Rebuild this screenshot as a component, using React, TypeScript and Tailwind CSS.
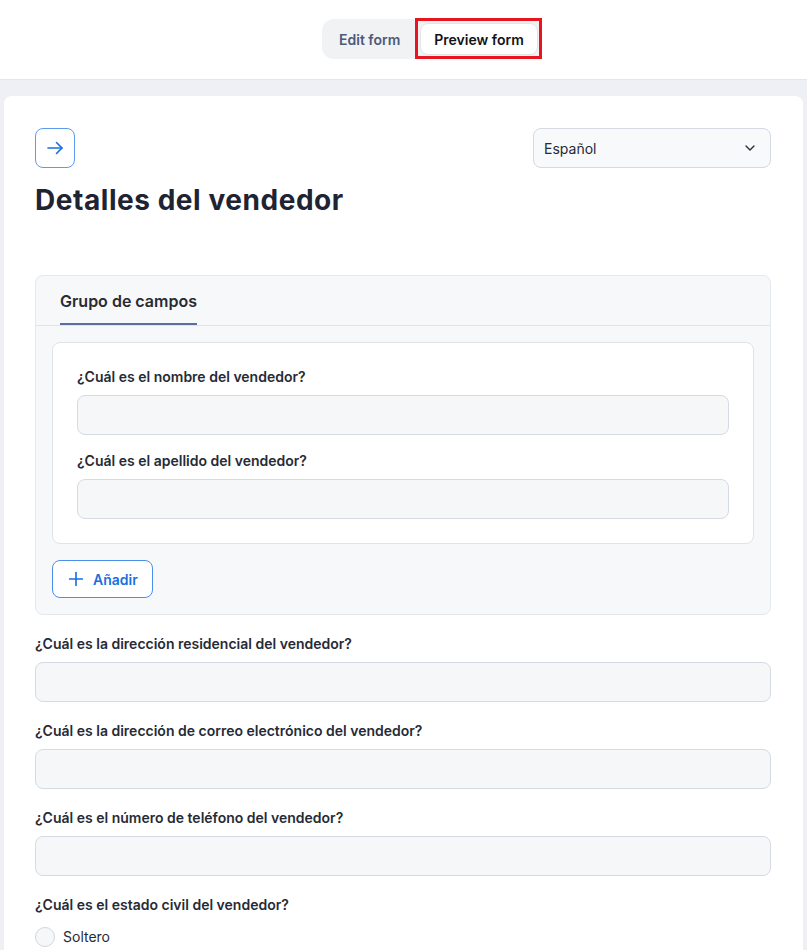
import React from "react";
import { ChevronDown, Plus } from "lucide-react";

function Field({ label }: { label: string }) {
  return (
    <div>
      <div className="text-[14px] leading-[20px] font-semibold text-[#262b36]">{label}</div>
      <div className="mt-2 h-[40px] rounded-lg border border-[#d6dae3] bg-[#f6f7f9]" />
    </div>
  );
}

export default function App() {
  return (
    <div className="min-h-screen bg-[#eff0f5]" style={{ fontFamily: "Inter, 'Noto Sans', sans-serif" }}>
      <header className="h-[80px] bg-white border-b border-[#e4e6ed] pt-[19px] pl-[322px]">
        <div className="inline-flex items-center h-[40px] bg-[#f1f2f4] rounded-xl p-1">
          <div className="pl-[13px] pr-[20px] text-[14px] font-semibold text-[#4b5a79]">Edit form</div>
          <div className="relative h-[32px] px-[13px] flex items-center bg-white rounded-lg border border-[#e2e4e8] text-[14px] font-semibold text-[#111318]">
            Preview form
            <div className="absolute -top-[6px] -left-[6px] -right-[5px] -bottom-[5px] border-[3px] border-[#e8141f]" />
          </div>
        </div>
      </header>
      <main className="pt-4 px-1">
        <div className="bg-white rounded-lg pl-[31px] pr-8 pt-8 pb-10">
          <div className="flex items-center justify-between">
            <div className="w-[40px] h-[40px] rounded-lg border border-[#5d9bef] flex items-center justify-center text-[#1a6fe0]">
              <svg width="16" height="16" viewBox="0 0 16 16" fill="none" stroke="currentColor" strokeWidth="1.6" strokeLinecap="round" strokeLinejoin="round">
                <path d="M1 8h14" />
                <path d="M9.5 2.5L15 8l-5.5 5.5" />
              </svg>
            </div>
            <div className="w-[238px] h-[40px] rounded-lg border border-[#d5d9e3] bg-[#f8f9fb] flex items-center justify-between pl-[10px] pr-[12px]">
              <span className="text-[14px] text-[#262b36]">Español</span>
              <ChevronDown size={16} strokeWidth={2} className="text-[#262b36]" />
            </div>
          </div>
          <h1 className="mt-[14px] text-[28px] leading-[36px] font-bold text-[#1e2433] tracking-[0.55px]">
            Detalles del vendedor
          </h1>
          <div className="mt-[57px] rounded-lg border border-[#e4e7ee] bg-[#f7f8fa]">
            <div className="h-[50px] border-b border-[#e1e4ec] px-6 flex">
              <div className="h-full flex items-center border-b-2 border-[#5a6f9c] text-[16px] font-semibold text-[#262b36] pt-[2px]">
                Grupo de campos
              </div>
            </div>
            <div className="p-4">
              <div className="bg-white rounded-lg border border-[#dfe3ea] px-6 pt-6 pb-6 flex flex-col gap-4">
                <Field label="¿Cuál es el nombre del vendedor?" />
                <Field label="¿Cuál es el apellido del vendedor?" />
              </div>
              <div className="mt-4 inline-flex items-center gap-[6px] h-[38px] pl-[12px] pr-[14px] rounded-lg border border-[#4a8fe8] bg-white text-[#1a6fe0] text-[14px] font-semibold">
                <Plus size={22} strokeWidth={1.8} />
                Añadir
              </div>
            </div>
          </div>
          <div className="mt-[19px] flex flex-col gap-[19px]">
            <Field label="¿Cuál es la dirección residencial del vendedor?" />
            <Field label="¿Cuál es la dirección de correo electrónico del vendedor?" />
            <Field label="¿Cuál es el número de teléfono del vendedor?" />
            <div>
              <div className="text-[14px] leading-[20px] font-semibold text-[#262b36]">¿Cuál es el estado civil del vendedor?</div>
              <div className="mt-[11px] flex items-center gap-2">
                <div className="w-[20px] h-[20px] rounded-full border border-[#d0d5df] bg-[#f6f7f9]" />
                <span className="text-[14px] text-[#262b36]">Soltero</span>
              </div>
            </div>
          </div>
        </div>
      </main>
    </div>
  );
}
